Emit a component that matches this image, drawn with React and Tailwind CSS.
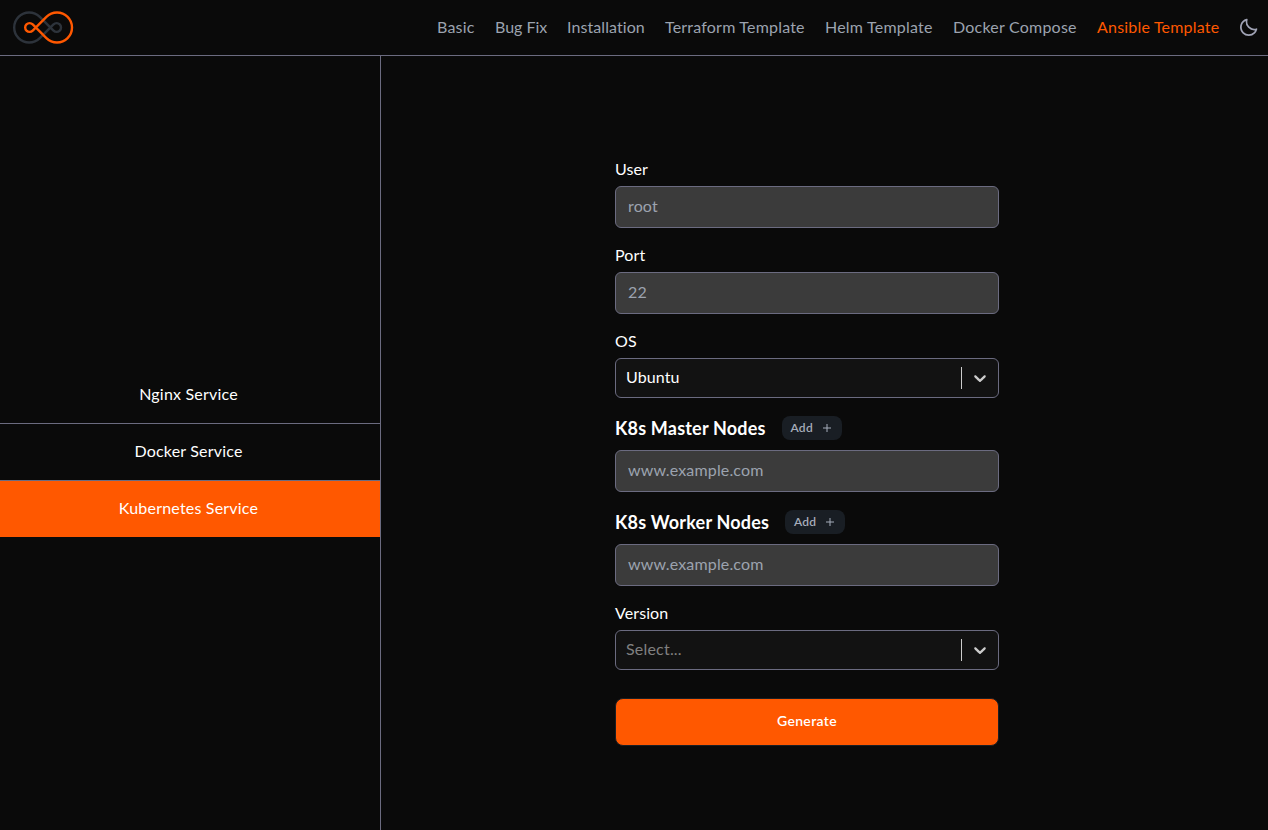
import { BiMoon } from "react-icons/bi";

const links = [
  { label: "Basic", cls: "w-[38px] tracking-[0.2px] text-[#9ca3af]" },
  { label: "Bug Fix", cls: "w-[52px] tracking-normal text-[#9ca3af]" },
  { label: "Installation", cls: "w-[78px] tracking-[0.08px] text-[#9ca3af]" },
  { label: "Terraform Template", cls: "w-[140px] tracking-[0.2px] text-[#9ca3af]" },
  { label: "Helm Template", cls: "w-[108px] tracking-[0.22px] text-[#9ca3af]" },
  { label: "Docker Compose", cls: "w-[124px] tracking-[0.22px] text-[#9ca3af]" },
  { label: "Ansible Template", cls: "w-[123px] tracking-[0.2px] text-[#ff5800]" },
];

function Logo() {
  return (
    <svg className="h-[34px] w-[62px]" viewBox="-0.2 0.5 62 34" fill="none" strokeWidth="2.4">
      <path stroke="#2d333b" d="M41.3 13.9A4.4 4.4 0 1 1 41.3 20.1L27.6 6.4A15 15 0 1 0 27.6 27.6Z" />
      <path stroke="#ff5800" d="M20.5 13.9A4.4 4.4 0 1 0 20.5 20.1L34.2 6.4A15 15 0 1 1 34.2 27.6Z" />
    </svg>
  );
}

function Field({ label, placeholder }) {
  return (
    <div className="mb-4 flex flex-col gap-1">
      <label className="h-6 leading-[22px]">{label}</label>
      <TextInput placeholder={placeholder} />
    </div>
  );
}

function TextInput({ placeholder }) {
  return (
    <input
      className="block h-[42px] w-full rounded-md border border-[#6b6b80] bg-[#3b3b3b] px-3 pb-[3px] tracking-[0.15px] placeholder:text-[#9ca3af]"
      placeholder={placeholder}
    />
  );
}

function SelectField({ label, value, muted }) {
  return (
    <div className="mb-4 flex flex-col gap-1">
      <label className="h-6 leading-[22px]">{label}</label>
      <div className="flex h-10 items-center rounded-md border border-[#6b6b80] bg-[#121212] pl-2.5">
        <span className={muted ? "grow pb-0.5 tracking-[0.2px] text-[#808080]" : "grow pb-0.5"}>{value}</span>
        <span className="h-[22px] w-px bg-[#cccccc]" />
        <span className="flex w-9 justify-center">
          <svg className="size-5 fill-[#cccccc]" viewBox="0 0 20 20">
            <path d="M4.516 7.548c0.436-0.446 1.043-0.481 1.576 0l3.908 3.747 3.908-3.747c0.533-0.481 1.141-0.446 1.574 0 0.436 0.445 0.408 1.197 0 1.615-0.406 0.418-4.695 4.502-4.695 4.502-0.217 0.223-0.502 0.335-0.787 0.335s-0.57-0.112-0.789-0.335c0 0-4.287-4.084-4.695-4.502s-0.436-1.17 0-1.615z" />
          </svg>
        </span>
      </div>
    </div>
  );
}

function NodeField({ title }) {
  return (
    <div className="mb-4">
      <div className="mb-2 flex h-7 items-center gap-4">
        <h2 className="text-lg font-bold tracking-[0.2px]">{title}</h2>
        <button className="flex h-6 w-[60px] items-center justify-center gap-2 rounded-lg bg-[#191e24] text-xs font-semibold tracking-[0.3px] text-[#a6adbb]">
          Add
          <svg className="size-3" viewBox="0 0 12 12" stroke="#a6adbb">
            <path d="M6 2v8M2 6h8" />
          </svg>
        </button>
      </div>
      <TextInput placeholder="www.example.com" />
    </div>
  );
}

export default function App() {
  return (
    <div className="flex h-screen flex-col overflow-hidden bg-[#0a0a0a] font-['Lato','Noto_Sans',sans-serif] text-base tracking-[0.1px] text-white">
      <header className="flex h-14 shrink-0 items-center justify-between border-b border-[#6b6b80] pr-[9px] pl-3">
        <Logo />
        <nav className="flex items-center gap-5 whitespace-nowrap">
          {links.map((l) => (
            <a key={l.label} className={`pb-0.5 ${l.cls}`}>
              {l.label}
            </a>
          ))}
          <BiMoon className="-ml-0.5 size-[21px] text-[#a0a3b5]" />
        </nav>
      </header>
      <div className="flex min-h-0 grow">
        <aside className="w-[381px] shrink-0 border-r border-[#6b6b80] pt-[311px] text-center tracking-[0.2px]">
          <div className="h-[57px] border-b border-[#6b6b80] pt-[15px] pr-[3px]">Nginx Service</div>
          <div className="h-[57px] border-b border-[#6b6b80] pt-[15px] pr-[3px]">Docker Service</div>
          <div className="h-14 bg-[#ff5800] pt-[15px] pr-[3px]">Kubernetes Service</div>
        </aside>
        <main className="grow pt-[102px] pl-[234px]">
          <form className="w-96">
            <Field label="User" placeholder="root" />
            <Field label="Port" placeholder="22" />
            <SelectField label="OS" value="Ubuntu" />
            <NodeField title="K8s Master Nodes" />
            <NodeField title="K8s Worker Nodes" />
            <SelectField label="Version" value="Select..." muted />
            <button className="mt-3 h-12 w-full rounded-lg border border-[#191e24] bg-[#ff5800] pb-0.5 text-sm font-semibold tracking-[0.35px]">
              Generate
            </button>
          </form>
        </main>
      </div>
    </div>
  );
}
